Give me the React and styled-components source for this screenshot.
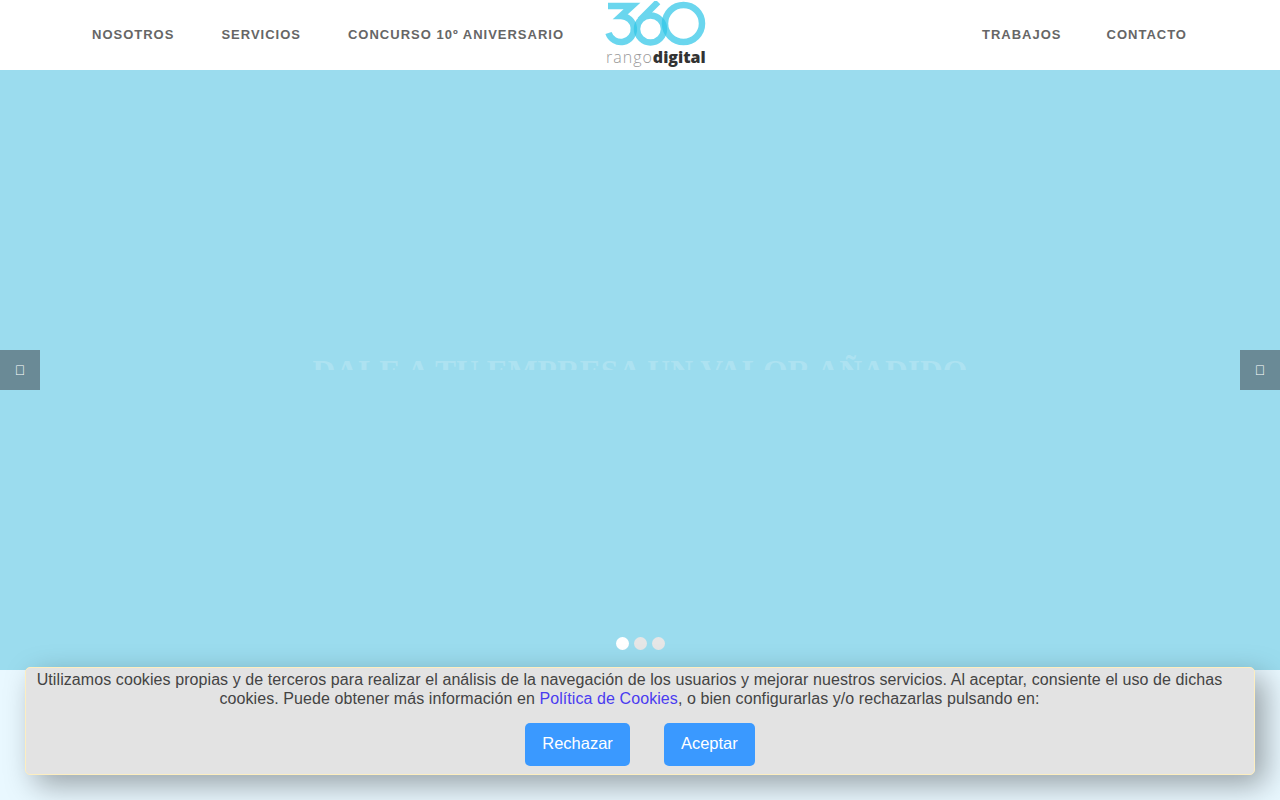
import React from 'react'
import styled, { createGlobalStyle } from 'styled-components'

const GlobalStyle = createGlobalStyle`
    html, body {
        margin: 0;
        padding: 0;
        height: 100%;
        overflow: hidden;
        background: #e9f8ff;
        font-family: "Liberation Sans", Arial, sans-serif;
    }
`

function Logo() {
    return (
        <LogoWrap>
            <svg width="102" height="46" viewBox="0 0 102 46">
                <g fill="none" stroke="#30c6e8" strokeOpacity="0.72" strokeWidth="6.5">
                    <path d="M3 5 H27 L16 15 A13 13 0 1 1 3.5 32" />
                    <path d="M53 1 L35 19 M59 28 A13.5 13.5 0 1 1 32 28 A13.5 13.5 0 1 1 59 28" />
                    <circle cx="78.5" cy="22.5" r="18.5" />
                </g>
            </svg>
            <LogoText><Light>rango</Light><b>digital</b></LogoText>
        </LogoWrap>
    )
}

function App() {
    return (
        <Page>
            <GlobalStyle />
            <Header>
                <NavLeft>
                    <NavLink href="#">Nosotros</NavLink>
                    <NavLink href="#">Servicios</NavLink>
                    <NavLink href="#">Concurso 10º Aniversario</NavLink>
                </NavLeft>
                <Logo />
                <NavRight>
                    <NavLink href="#">Trabajos</NavLink>
                    <NavLink href="#">Contacto</NavLink>
                </NavRight>
            </Header>
            <Hero>
                <Arrow side="left">{'\uf104'}</Arrow>
                <CaptionClip>
                    <Caption>DALE A TU EMPRESA UN VALOR AÑADIDO</Caption>
                </CaptionClip>
                <Arrow side="right">{'\uf105'}</Arrow>
                <Dots>
                    <Dot active />
                    <Dot />
                    <Dot />
                </Dots>
            </Hero>
            <Below>
                <Mark />
            </Below>
            <CookieBox>
                <CookieText>
                    Utilizamos cookies propias y de terceros para realizar el análisis de la navegación de los usuarios y mejorar nuestros servicios. Al aceptar, consiente el uso de dichas cookies. Puede obtener más información en <CookieLink href="#">Política de Cookies</CookieLink>, o bien configurarlas y/o rechazarlas pulsando en:
                </CookieText>
                <Buttons>
                    <CookieButton>Rechazar</CookieButton>
                    <CookieButton>Aceptar</CookieButton>
                </Buttons>
            </CookieBox>
        </Page>
    )
}

export default App

const Page = styled.div`
    position: relative;
    width: 1280px;
    height: 800px;
    overflow: hidden;
    background: #e9f8ff;
`
const Header = styled.header`
    height: 70px;
    background: #fff;
    display: flex;
    align-items: flex-start;
`
const NavLeft = styled.nav`
    display: flex;
    align-items: center;
    gap: 47px;
    height: 69px;
    padding-left: 92px;
    width: 513px;
`
const NavRight = styled.nav`
    display: flex;
    align-items: center;
    gap: 45px;
    height: 69px;
    margin-left: 275px;
`
const NavLink = styled.a`
    font-family: "Liberation Sans", sans-serif;
    font-size: 13px;
    font-weight: 700;
    letter-spacing: 1px;
    text-transform: uppercase;
    text-decoration: none;
    color: #666;
    white-space: nowrap;
`
const LogoWrap = styled.div`
    width: 102px;
    margin-top: 1px;
    display: flex;
    flex-direction: column;
    svg {
        display: block;
    }
`
const LogoText = styled.div`
    font-family: "Open Sans", sans-serif;
    font-size: 16px;
    line-height: 21px;
    padding-left: 1px;
    white-space: nowrap;
    b {
        font-weight: 800;
        color: #333;
    }
`
const Light = styled.span`
    font-weight: 300;
    color: #999;
    letter-spacing: 1px;
`
const Hero = styled.section`
    position: relative;
    height: 600px;
    background: #9bdcee;
    display: flex;
    align-items: center;
    justify-content: center;
`
const CaptionClip = styled.div`
    height: 16px;
    margin-bottom: 16px;
    overflow: hidden;
    display: flex;
    justify-content: center;
`
const Caption = styled.h2`
    margin: 0;
    font-family: "Liberation Serif", serif;
    font-size: 31.6px;
    line-height: 36px;
    font-weight: 700;
    color: rgba(255, 255, 255, 0.2);
    white-space: nowrap;
`
const Arrow = styled.button`
    position: absolute;
    top: 280px;
    ${(p) => (p.side === 'left' ? 'left: 0;' : 'right: 0;')}
    width: 40px;
    height: 40px;
    border: 0;
    padding: 0;
    background: #6a8a96;
    color: #fff;
    font-family: "Liberation Sans", sans-serif;
    font-size: 14px;
`
const Dots = styled.div`
    position: absolute;
    left: 616px;
    top: 567px;
    display: flex;
    gap: 5px;
`
const Dot = styled.span`
    width: 13px;
    height: 13px;
    border-radius: 50%;
    background: ${(p) => (p.active ? '#fff' : '#e6e6e6')};
`
const Below = styled.section`
    height: 130px;
    padding-top: 103px;
    box-sizing: border-box;
    display: flex;
    justify-content: center;
`
const Mark = styled.span`
    width: 2px;
    height: 2px;
    margin-left: 2px;
    background: #3a5a8a;
`
const CookieBox = styled.div`
    position: absolute;
    left: 25px;
    top: 667px;
    width: 1230px;
    height: 108px;
    box-sizing: border-box;
    background: #e3e3e3;
    border: 1px solid #fdeec0;
    border-radius: 5px;
    box-shadow: 10px 10px 30px rgba(0, 0, 0, 0.35);
    padding: 2px 0 0;
`
const CookieText = styled.p`
    margin: 0;
    padding: 0 31px 0 10px;
    font-size: 16px;
    line-height: 19px;
    letter-spacing: 0.08px;
    color: #444;
    text-align: center;
`
const CookieLink = styled.a`
    color: #4a3cf0;
    text-decoration: none;
`
const Buttons = styled.div`
    display: flex;
    justify-content: center;
    gap: 34px;
    margin-top: 15px;
`
const CookieButton = styled.button`
    height: 43px;
    padding: 0 17px 2px;
    border: 0;
    border-radius: 5px;
    background: #3a99ff;
    color: #fff;
    font-family: "Liberation Sans", sans-serif;
    font-size: 16.5px;
`
